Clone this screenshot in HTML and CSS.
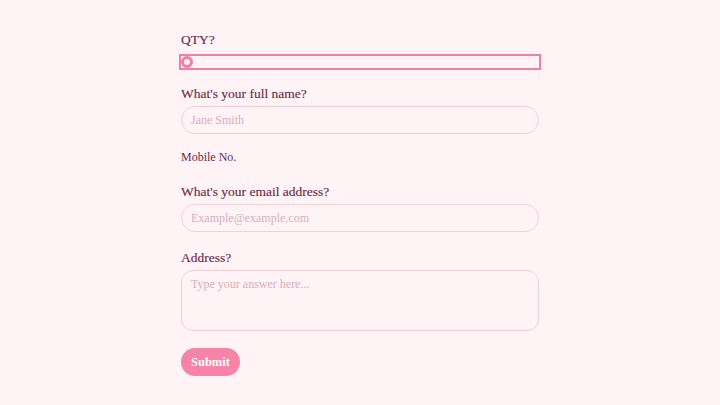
FILE: index.html
```html
<!DOCTYPE html>
<html lang="en">
<head>
<meta charset="utf-8">
<title>Form</title>
<link rel="stylesheet" href="styles.css">
</head>
<body>
<form class="form">
  <div class="field">
    <div class="label">QTY?</div>
    <div class="radio-box"><span class="radio"></span></div>
  </div>
  <div class="field">
    <div class="label">What's your full name?</div>
    <div class="input"><span class="ph">Jane Smith</span></div>
  </div>
  <div class="field">
    <div class="label small">Mobile No.</div>
  </div>
  <div class="field">
    <div class="label">What's your email address?</div>
    <div class="input"><span class="ph">Example@example.com</span></div>
  </div>
  <div class="field field-address">
    <div class="label">Address?</div>
    <div class="textarea"><span class="ph">Type your answer here...</span></div>
  </div>
  <div class="actions">
    <span class="submit">Submit</span>
  </div>
</form>
</body>
</html>
```
FILE: styles.css
```css
html, body {
  margin: 0;
  padding: 0;
  background: #fff3f6;
}
body {
  font-family: "Liberation Serif", "DejaVu Serif", serif;
  color: #6b2c47;
}
.form {
  width: 358px;
  margin: 0 auto;
  padding-top: 30px;
  display: flex;
  flex-direction: column;
  gap: 14px;
}
.field {
  display: flex;
  flex-direction: column;
}
.field-address {
  margin-top: 2px;
}
.label {
  font-size: 13.5px;
  line-height: 20px;
  margin-bottom: 2px;
  -webkit-text-stroke: 0.15px #6b2c47;
}
.label.small {
  font-size: 12px;
  line-height: 18px;
  -webkit-text-stroke: 0;
}
.radio-box {
  margin: 2px -2px 0;
  height: 12px;
  border: 2px solid #f17ea6;
  display: flex;
  align-items: center;
}
.radio {
  box-sizing: border-box;
  width: 12px;
  height: 12px;
  border: 3.5px solid #f17ea6;
  border-radius: 50%;
  background: #fff3f6;
}
.input {
  box-sizing: border-box;
  height: 28px;
  border: 1px solid #f1cfd9;
  border-radius: 14px;
  display: flex;
  align-items: center;
  padding: 0 9px;
}
.textarea {
  box-sizing: border-box;
  height: 61px;
  border: 1px solid #f1cfd9;
  border-radius: 12px;
  padding: 3px 9px;
}
.ph {
  font-size: 12px;
  line-height: 18px;
  color: #d8adbd;
}
.actions {
  display: flex;
  padding-top: 3px;
}
.submit {
  background: #f783a8;
  color: #fff;
  font-weight: bold;
  font-size: 12.5px;
  height: 28px;
  line-height: 28px;
  padding: 0 10px;
  border-radius: 14px;
}
```
